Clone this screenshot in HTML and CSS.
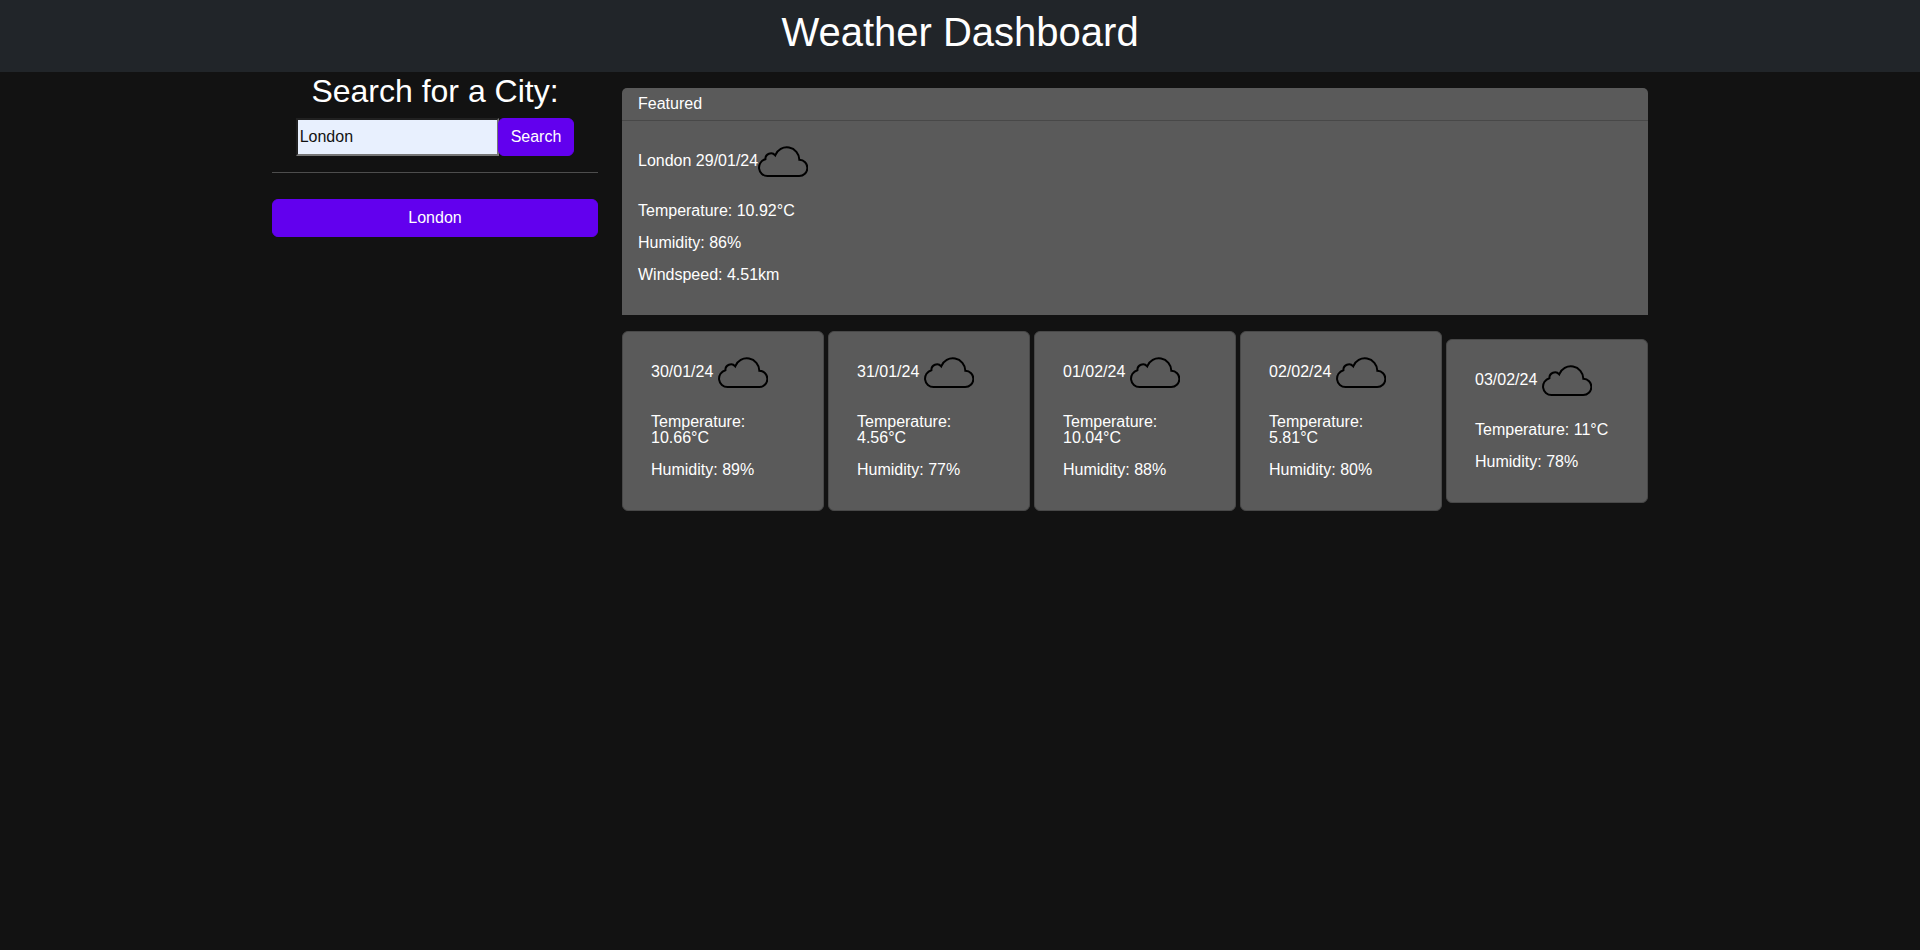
FILE: index.html
```html
<!DOCTYPE html>
<html lang="en">
<head>
<meta charset="utf-8">
<title>Weather Dashboard</title>
<link rel="stylesheet" href="styles.css">
</head>
<body>
<svg class="defs" aria-hidden="true"><symbol id="cloud" viewBox="0 0 50 50"><path d="M9.5 39.1A8.6 8.6 0 0 1 7.4 22.2A5.6 5.6 0 0 1 17.2 18.3A12.5 12.5 0 0 1 41.35 22.7A8.2 8.2 0 0 1 41 39.1Z" fill="none" stroke="#000" stroke-width="2"/></symbol></svg>
<header class="header"><h1 class="title">Weather Dashboard</h1></header>
<div class="container">
  <aside class="sidebar">
    <h2 class="search-title">Search for a City:</h2>
    <form class="search-form">
      <input class="search-input" type="text" value="London"><button class="btn" type="button">Search</button>
    </form>
    <hr class="divider">
    <button class="btn btn-city" type="button">London</button>
  </aside>
  <main class="main">
    <section class="featured">
      <div class="featured-header">Featured</div>
      <div class="featured-body">
        <p>London 29/01/24<svg class="icon"><use href="#cloud"/></svg></p>
        <p>Temperature: 10.92°C</p>
        <p>Humidity: 86%</p>
        <p>Windspeed: 4.51km</p>
      </div>
    </section>
    <section class="forecast">
      <article class="day"><p>30/01/24 <svg class="icon"><use href="#cloud"/></svg></p><p>Temperature: 10.66°C</p><p>Humidity: 89%</p></article>
      <article class="day"><p>31/01/24 <svg class="icon"><use href="#cloud"/></svg></p><p>Temperature: 4.56°C</p><p>Humidity: 77%</p></article>
      <article class="day"><p>01/02/24 <svg class="icon"><use href="#cloud"/></svg></p><p>Temperature: 10.04°C</p><p>Humidity: 88%</p></article>
      <article class="day"><p>02/02/24 <svg class="icon"><use href="#cloud"/></svg></p><p>Temperature: 5.81°C</p><p>Humidity: 80%</p></article>
      <article class="day"><p>03/02/24 <svg class="icon"><use href="#cloud"/></svg></p><p>Temperature: 11°C</p><p>Humidity: 78%</p></article>
    </section>
  </main>
</div>
</body>
</html>
```
FILE: styles.css
```css
* { box-sizing: border-box; }
body {
  margin: 0;
  background: #121212;
  color: #fff;
  font: 16px/1 "Liberation Sans", Arial, sans-serif;
}
p { margin: 0 0 16px; }
.defs { display: none; }
.header { height: 72px; padding: 8px; background: #212529; text-align: center; }
.title { margin: 0; font-size: 40px; font-weight: 400; line-height: 48px; }
.container { width: 1376px; margin: 0 auto; display: flex; align-items: flex-start; gap: 24px; }
.sidebar { width: 326px; }
.search-title { margin: 0 0 8px; font-size: 32px; font-weight: 400; line-height: 38px; text-align: center; }
.search-form { display: flex; justify-content: center; margin: 0; }
.search-input {
  width: 203px;
  height: 38px;
  margin-right: -1px;
  padding: 1px 2px;
  border: 2px inset #767676;
  border-radius: 0;
  background: #e8f0fe;
  color: #121212;
  font: inherit;
}
.btn {
  position: relative;
  height: 38px;
  padding: 0 12px;
  border: 1px solid #6200ee;
  border-radius: 6px;
  background: #6200ee;
  color: #fff;
  font: 16px/24px "Liberation Sans", Arial, sans-serif;
}
.divider { margin: 16px 0 26px; border: 0; border-top: 1px solid #4d4d4d; }
.btn-city { display: block; width: 100%; }
.main { flex: 1; padding-top: 16px; }
.featured { background: #5a5a5a; border-radius: 5px 5px 0 0; }
.featured-header { padding: 8px 16px; border-bottom: 1px solid #484848; }
.featured-body { padding: 16px 16px 0; height: 194px; }
.icon { width: 50px; height: 50px; vertical-align: middle; }
.forecast { display: flex; align-items: center; gap: 4px; margin-top: 16px; }
.day {
  width: 202px;
  padding: 16px 28px;
  border: 1px solid #484848;
  border-radius: 6px;
  background: #5a5a5a;
}
```
